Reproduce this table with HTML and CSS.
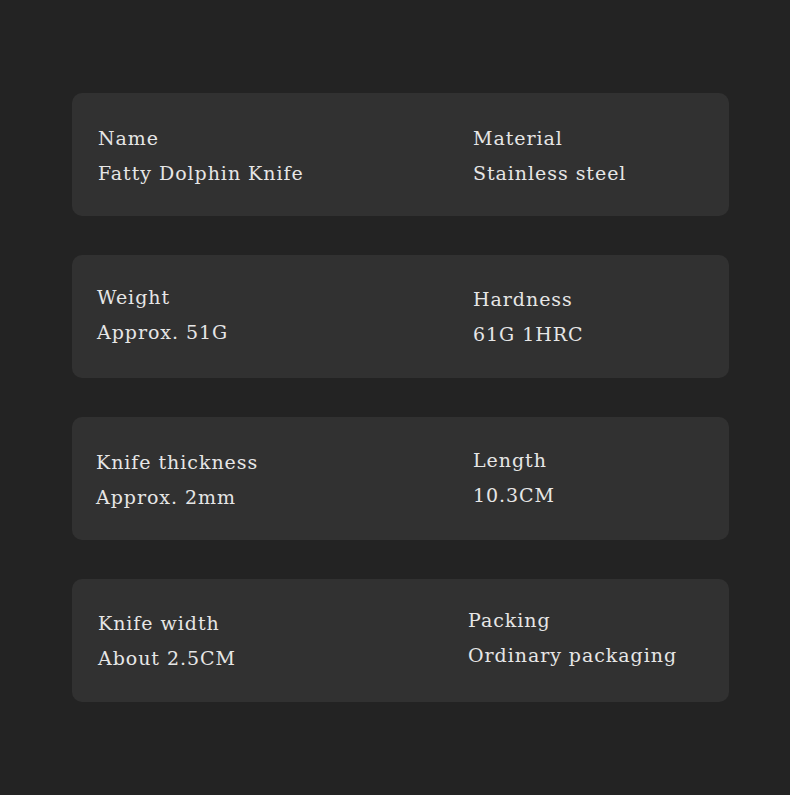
FILE: index.html
```html
<!DOCTYPE html>
<html>
<head>
<meta charset="utf-8">
<link rel="stylesheet" href="styles.css">
</head>
<body>
<main class="specs">
  <section class="card">
    <div class="item"><div class="label">Name</div><div class="value">Fatty Dolphin Knife</div></div>
    <div class="item"><div class="label">Material</div><div class="value">Stainless steel</div></div>
  </section>
  <section class="card card-2">
    <div class="item"><div class="label">Weight</div><div class="value">Approx. 51G</div></div>
    <div class="item item-low"><div class="label">Hardness</div><div class="value">61G 1HRC</div></div>
  </section>
  <section class="card card-3">
    <div class="item"><div class="label">Knife thickness</div><div class="value">Approx. 2mm</div></div>
    <div class="item item-high"><div class="label">Length</div><div class="value">10.3CM</div></div>
  </section>
  <section class="card card-4">
    <div class="item"><div class="label">Knife width</div><div class="value">About 2.5CM</div></div>
    <div class="item item-high item-left"><div class="label">Packing</div><div class="value">Ordinary packaging</div></div>
  </section>
</main>
</body>
</html>
```
FILE: styles.css
```css
html, body {
  margin: 0;
  padding: 0;
  background: #232323;
}
body {
  width: 790px;
  height: 795px;
  overflow: hidden;
  font-family: "DejaVu Serif", "Liberation Serif", serif;
  color: #e6e6e6;
}
.specs {
  padding: 93px 61px 0 72px;
  display: flex;
  flex-direction: column;
  gap: 39px;
}
.card {
  height: 123px;
  background: #313131;
  border-radius: 10px;
  display: grid;
  grid-template-columns: 375px 1fr;
  box-sizing: border-box;
  padding: 28px 0 0 26px;
}
.card-2 { padding-top: 25px; padding-left: 25px; }
.card-3 { padding-top: 28px; padding-left: 24px; }
.card-4 { padding-top: 27px; padding-left: 26px; }
.card-2 .item + .item { margin-left: 1px; }
.card-3 .item + .item { margin-left: 2px; }
.item {
  display: flex;
  flex-direction: column;
}
.label, .value {
  font-size: 19px;
  line-height: 35px;
  letter-spacing: 0.95px;
  white-space: nowrap;
}
.item-low { margin-top: 2px; }
.item-high { margin-top: -2px; }
.item-left { margin-left: -5px; margin-top: -3px; }
```
